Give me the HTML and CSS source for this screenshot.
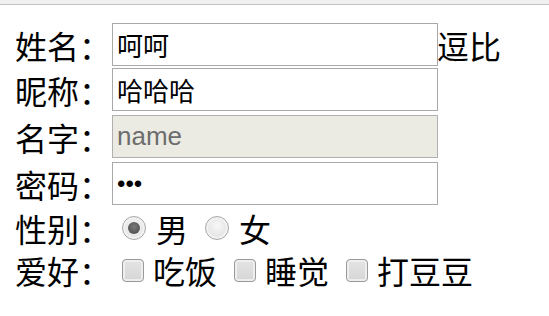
FILE: index.html
```html
<!DOCTYPE html>
<html lang="zh-CN">
<head>
<meta charset="utf-8">
<title>表单</title>
<link rel="stylesheet" href="styles.css">
</head>
<body>
<div class="topbar"></div>
<form class="form">
  <div class="row r1">
    <span class="label">姓名：</span>
    <input class="field" type="text" value="呵呵">
    <span class="after">逗比</span>
  </div>
  <div class="row r2">
    <span class="label">昵称：</span>
    <input class="field" type="text" value="哈哈哈">
  </div>
  <div class="row r3">
    <span class="label">名字：</span>
    <input class="field" type="text" value="name" disabled>
  </div>
  <div class="row r4">
    <span class="label">密码：</span>
    <input class="field" type="password" value="123">
  </div>
  <div class="row r5">
    <span class="label">性别：</span>
    <div class="options">
      <label class="opt radio-opt"><input class="radio" type="radio" name="sex" checked><span>男</span></label>
      <label class="opt radio-opt"><input class="radio" type="radio" name="sex"><span>女</span></label>
    </div>
  </div>
  <div class="row r6">
    <span class="label">爱好：</span>
    <div class="options">
      <label class="opt check-opt"><input class="check" type="checkbox"><span>吃饭</span></label>
      <label class="opt check-opt"><input class="check" type="checkbox"><span>睡觉</span></label>
      <label class="opt check-opt"><input class="check" type="checkbox"><span>打豆豆</span></label>
    </div>
  </div>
</form>
</body>
</html>
```
FILE: styles.css
```css
html, body {
  margin: 0;
  padding: 0;
  background: #ffffff;
}
body {
  font-family: "Noto Sans CJK SC", "Liberation Sans", sans-serif;
  font-size: 32px;
  color: #000000;
}
.topbar {
  height: 4px;
  background: #f0f0f0;
  border-bottom: 1px solid #c2c2c2;
}
.form {
  display: flex;
  flex-direction: column;
  padding: 18px 0 0 15px;
}
.row {
  display: flex;
  align-items: center;
  line-height: 1;
}
.r1 { height: 43px; }
.r2 { height: 43px; margin-top: 2px; }
.r3 { height: 43px; margin-top: 4px; }
.r4 { height: 43px; margin-top: 4px; }
.r5 { height: 45px; }
.r6 { height: 40px; }
.label {
  width: 97px;
  flex: none;
  white-space: nowrap;
}
.field {
  box-sizing: border-box;
  width: 326px;
  height: 43px;
  margin: 0;
  padding: 0 4px;
  border: 1px solid #a9a9a9;
  border-radius: 0;
  background: #ffffff;
  font-family: "Liberation Sans", "Noto Sans CJK SC", sans-serif;
  font-size: 26px;
  color: #000000;
  outline: none;
}
.field:disabled {
  background: #ebebe4;
  color: #6d6d6d;
  border-color: #b0b0b0;
}
.field[type="password"] {
  font-size: 24px;
  letter-spacing: 0;
}
.after {
  margin-left: -1px;
  white-space: nowrap;
}
.options {
  display: flex;
  align-items: center;
  gap: 17px;
  padding-left: 10px;
}
.opt {
  display: flex;
  align-items: center;
  white-space: nowrap;
}
.radio-opt { gap: 10px; }
.check-opt { gap: 9px; }
.radio {
  appearance: none;
  -webkit-appearance: none;
  box-sizing: border-box;
  width: 24px;
  height: 24px;
  margin: 0;
  border-radius: 50%;
  border: 1px solid #a8a8a8;
  background: radial-gradient(circle at 50% 40%, #f7f7f7 0%, #e6e6e6 60%, #d2d2d2 100%);
  box-shadow: inset 0 0 0 2px #f2f2f2;
  position: relative;
  flex: none;
}
.radio:checked::after {
  content: "";
  position: absolute;
  left: 5px;
  top: 5px;
  width: 12px;
  height: 12px;
  border-radius: 50%;
  background: radial-gradient(circle at 50% 40%, #7a7a7a 0%, #555555 70%, #4a4a4a 100%);
}
.check {
  appearance: none;
  -webkit-appearance: none;
  box-sizing: border-box;
  width: 22px;
  height: 23px;
  margin: 0;
  border-radius: 4px;
  border: 1px solid #9a9a9a;
  background: linear-gradient(#e4e4e4, #d6d6d6);
  box-shadow: inset 0 0 0 2px #eeeeee;
  flex: none;
}
```
